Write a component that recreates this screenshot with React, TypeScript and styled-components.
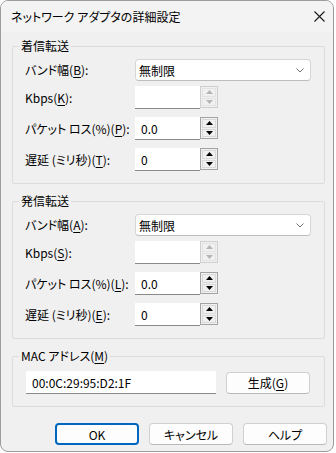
import React from "react";
import styled, { createGlobalStyle, css } from "styled-components";

const Global = createGlobalStyle`
  html, body { margin: 0; padding: 0; background: #ffffff; }
  body {
    font-family: "Noto Sans CJK JP", "Noto Sans", sans-serif;
    font-size: 12px;
    font-feature-settings: "palt";
    color: #000;
  }
  * { box-sizing: border-box; }
`;

const Window = styled.div`
  width: 334px;
  height: 452px;
  background: #f0f0f0;
  border: 1px solid #9c9c9c;
  border-radius: 8px;
  overflow: hidden;
  display: flex;
  flex-direction: column;
`;

const TitleBar = styled.div`
  height: 31px;
  background: #f3f3f3;
  display: flex;
  align-items: center;
  justify-content: space-between;
  padding: 0 8px 0 10px;
  font-size: 12px;
  line-height: 1;
`;

const Body = styled.div`
  display: flex;
  flex-direction: column;
  padding: 14px 0 0 11px;
`;

const Group = styled.div<{ $gap?: number }>`
  position: relative;
  width: 313px;
  border: 1px solid #dcdcdc;
  border-radius: 2px;
  margin-top: ${(p) => p.$gap ?? 0}px;
`;

const Legend = styled.span`
  position: absolute;
  top: -9px;
  left: 6px;
  padding: 0 2px;
  background: #f0f0f0;
  line-height: 16px;
  font-size: 12px;
  u { text-underline-offset: 2px; }
`;

const Rows = styled.div`
  display: flex;
  flex-direction: column;
  padding: 12px 12px;
`;

const Row = styled.div<{ $h: number; $mt?: number }>`
  display: flex;
  align-items: center;
  height: ${(p) => p.$h}px;
  margin-top: ${(p) => p.$mt ?? 0}px;
`;

const Label = styled.div`
  width: 110px;
  white-space: nowrap;
  line-height: 1;
  u { text-underline-offset: 2px; }
`;

const Select = styled.div`
  width: 176px;
  height: 22px;
  background: #ffffff;
  border: 1px solid #d6d6d6;
  border-bottom-color: #bdbdbd;
  border-radius: 4px;
  display: flex;
  align-items: center;
  justify-content: space-between;
  padding: 0 6px 0 3px;
  font-size: 12px;
`;

const SpinRow = styled.div`
  display: flex;
  align-items: flex-start;
  height: 23px;
`;

const Field = styled.div<{ $w: number }>`
  width: ${(p) => p.$w}px;
  height: 23px;
  background: #ffffff;
  border-bottom: 1px solid #8a8a8a;
  display: flex;
  align-items: center;
  padding-left: 6px;
  font-size: 12px;
`;

const Spin = styled.div<{ $disabled?: boolean }>`
  width: 18px;
  height: 22px;
  display: flex;
  flex-direction: column;
  border: 1px solid ${(p) => (p.$disabled ? "#cfcfcf" : "#a3a3a3")};
  background: #f0f0f0;
  padding: 1px;
  gap: 1px;
`;

const SpinBtn = styled.div<{ $disabled?: boolean }>`
  flex: 1;
  display: flex;
  align-items: center;
  justify-content: center;
  background: #f0f0f0;
  border: 1px solid ${(p) => (p.$disabled ? "#e3e3e3" : "#d9d9d9")};
`;

const MacRow = styled.div`
  display: flex;
  align-items: center;
  gap: 10px;
  padding: 14px 13px 12px 13px;
`;

const Button = styled.div<{ $w?: number; $default?: boolean }>`
  width: ${(p) => p.$w ?? 84}px;
  height: 22px;
  background: #fdfdfd;
  border: 1px solid #d0d0d0;
  border-bottom-color: #b9b9b9;
  border-radius: 4px;
  display: flex;
  align-items: center;
  justify-content: center;
  font-size: 12px;
  ${(p) =>
    p.$default &&
    css`
      border: 2px solid #0067c0;
    `}
  u { text-underline-offset: 2px; }
`;

const Footer = styled.div`
  display: flex;
  justify-content: flex-end;
  gap: 10px;
  padding: 16px 6px 0 0;
`;

const Arrow = ({ up, disabled }: { up?: boolean; disabled?: boolean }) => (
  <svg width="7" height="4" viewBox="0 0 7 4">
    <polygon
      points={up ? "3.5,0 7,4 0,4" : "0,0 7,0 3.5,4"}
      fill={disabled ? "#b5b5b5" : "#000"}
    />
  </svg>
);

const Spinner = ({ disabled }: { disabled?: boolean }) => (
  <Spin $disabled={disabled}>
    <SpinBtn $disabled={disabled}>
      <Arrow up disabled={disabled} />
    </SpinBtn>
    <SpinBtn $disabled={disabled}>
      <Arrow disabled={disabled} />
    </SpinBtn>
  </Spin>
);

const Chevron = () => (
  <svg width="8" height="5" viewBox="0 0 8 5">
    <polyline points="0.5,0.5 4,4 7.5,0.5" fill="none" stroke="#707070" strokeWidth="1" />
  </svg>
);

const CloseIcon = () => (
  <svg width="11" height="11" viewBox="0 0 11 11">
    <path d="M0.5 0.5 L10.5 10.5 M10.5 0.5 L0.5 10.5" stroke="#1a1a1a" strokeWidth="1.1" />
  </svg>
);

type Keys = { bw: string; kbps: string; loss: string; lat: string };

const TrafficGroup = ({ title, keys, gap }: { title: string; keys: Keys; gap?: number }) => (
  <Group $gap={gap}>
    <Legend>{title}</Legend>
    <Rows>
      <Row $h={22}>
        <Label>
          バンド幅(<u>{keys.bw}</u>):
        </Label>
        <Select>
          <span>無制限</span>
          <Chevron />
        </Select>
      </Row>
      <Row $h={23} $mt={5}>
        <Label>
          Kbps(<u>{keys.kbps}</u>):
        </Label>
        <SpinRow>
          <Field $w={65} />
          <Spinner disabled />
        </SpinRow>
      </Row>
      <Row $h={23} $mt={8}>
        <Label>
          パケット ロス(%)(<u>{keys.loss}</u>):
        </Label>
        <SpinRow>
          <Field $w={65}>0.0</Field>
          <Spinner />
        </SpinRow>
      </Row>
      <Row $h={23} $mt={8}>
        <Label>
          遅延 (ミリ秒)(<u>{keys.lat}</u>):
        </Label>
        <SpinRow>
          <Field $w={65}>0</Field>
          <Spinner />
        </SpinRow>
      </Row>
    </Rows>
  </Group>
);

export default function App() {
  return (
    <>
      <Global />
      <Window>
        <TitleBar>
          <span>ネットワーク アダプタの詳細設定</span>
          <CloseIcon />
        </TitleBar>
        <Body>
          <TrafficGroup title="着信転送" keys={{ bw: "B", kbps: "K", loss: "P", lat: "T" }} />
          <TrafficGroup title="発信転送" gap={17} keys={{ bw: "A", kbps: "S", loss: "L", lat: "E" }} />
          <Group $gap={17}>
            <Legend>
              MAC アドレス(<u>M</u>)
            </Legend>
            <MacRow>
              <Field $w={190}>00:0C:29:95:D2:1F</Field>
              <Button>
                生成(<u>G</u>)
              </Button>
            </MacRow>
          </Group>
        </Body>
        <Footer>
          <Button $default>OK</Button>
          <Button>キャンセル</Button>
          <Button>ヘルプ</Button>
        </Footer>
      </Window>
    </>
  );
}
